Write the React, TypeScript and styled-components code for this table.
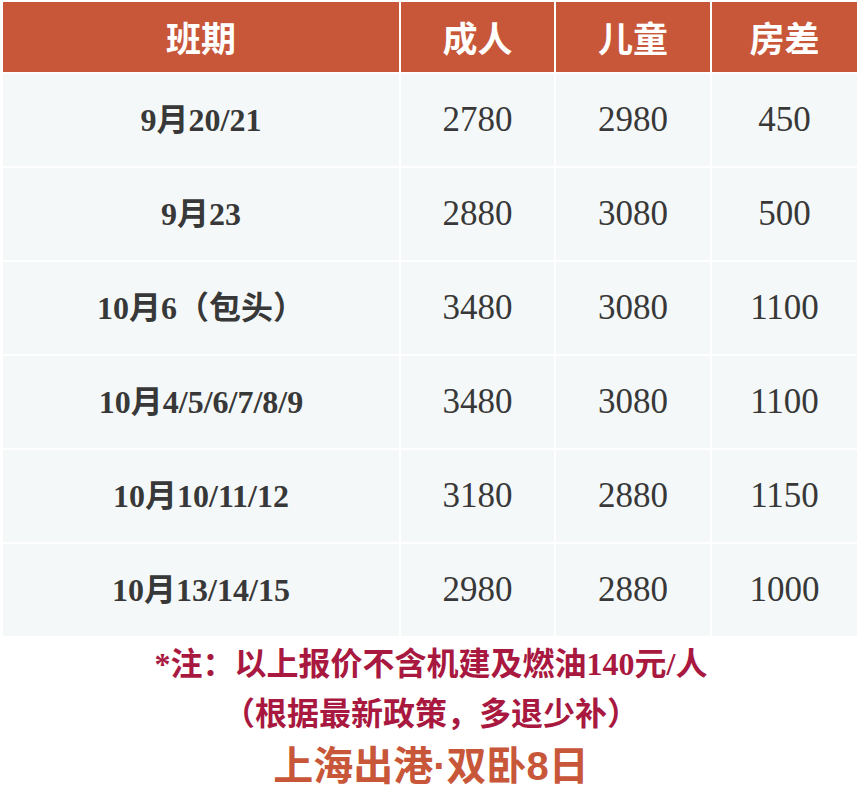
import React from "react";
import styled, { createGlobalStyle } from "styled-components";

const GlobalStyle = createGlobalStyle`
  html, body {
    margin: 0;
    padding: 0;
    background: #ffffff;
  }
  body {
    font-family: "Liberation Serif", "Noto Sans CJK SC", serif;
  }
`;

const Page = styled.div`
  width: 860px;
  padding: 0 0 0 1px;
`;

const Table = styled.table`
  width: 858px;
  border-collapse: separate;
  border-spacing: 2px;
  table-layout: fixed;
  background: #ffffff;
`;

const HeadCell = styled.th`
  height: 70px;
  padding: 0;
  background: #c8573a;
  color: #ffffff;
  font-family: "Noto Sans CJK SC", sans-serif;
  font-weight: 700;
  font-size: 35px;
  line-height: 1.2;
  text-align: center;
  vertical-align: middle;
`;

const Cell = styled.td<{ $bold?: boolean }>`
  height: 92px;
  padding: 0;
  background: #f5f8f9;
  color: #383838;
  text-align: center;
  vertical-align: middle;
  font-family: "Liberation Serif", "Noto Sans CJK SC", serif;
  font-weight: ${(p) => (p.$bold ? 700 : 400)};
  font-size: ${(p) => (p.$bold ? "32px" : "35px")};
  line-height: 1.15;
  white-space: nowrap;
`;

const Notes = styled.div`
  text-align: center;
  padding-top: 1px;
`;

const NoteLine = styled.div`
  color: #a8183f;
  font-family: "Liberation Serif", "Noto Sans CJK SC", serif;
  font-weight: 700;
  font-size: 32px;
  line-height: 50px;
`;

const Title = styled.div`
  color: #c8573a;
  font-family: "Liberation Sans", "Noto Sans CJK SC", sans-serif;
  font-weight: 700;
  font-size: 40px;
  line-height: 54px;
`;

const rows = [
  ["9月20/21", "2780", "2980", "450"],
  ["9月23", "2880", "3080", "500"],
  ["10月6（包头）", "3480", "3080", "1100"],
  ["10月4/5/6/7/8/9", "3480", "3080", "1100"],
  ["10月10/11/12", "3180", "2880", "1150"],
  ["10月13/14/15", "2980", "2880", "1000"],
];

export default function App() {
  return (
    <Page>
      <GlobalStyle />
      <Table>
        <colgroup>
          <col style={{ width: 396 }} />
          <col style={{ width: 153 }} />
          <col style={{ width: 154 }} />
          <col style={{ width: 145 }} />
        </colgroup>
        <thead>
          <tr>
            <HeadCell>班期</HeadCell>
            <HeadCell>成人</HeadCell>
            <HeadCell>儿童</HeadCell>
            <HeadCell>房差</HeadCell>
          </tr>
        </thead>
        <tbody>
          {rows.map((r) => (
            <tr key={r[0]}>
              <Cell $bold>{r[0]}</Cell>
              <Cell>{r[1]}</Cell>
              <Cell>{r[2]}</Cell>
              <Cell>{r[3]}</Cell>
            </tr>
          ))}
        </tbody>
      </Table>
      <Notes>
        <NoteLine>*注：以上报价不含机建及燃油140元/人</NoteLine>
        <NoteLine>（根据最新政策，多退少补）</NoteLine>
        <Title>上海出港·双卧8日</Title>
      </Notes>
    </Page>
  );
}
